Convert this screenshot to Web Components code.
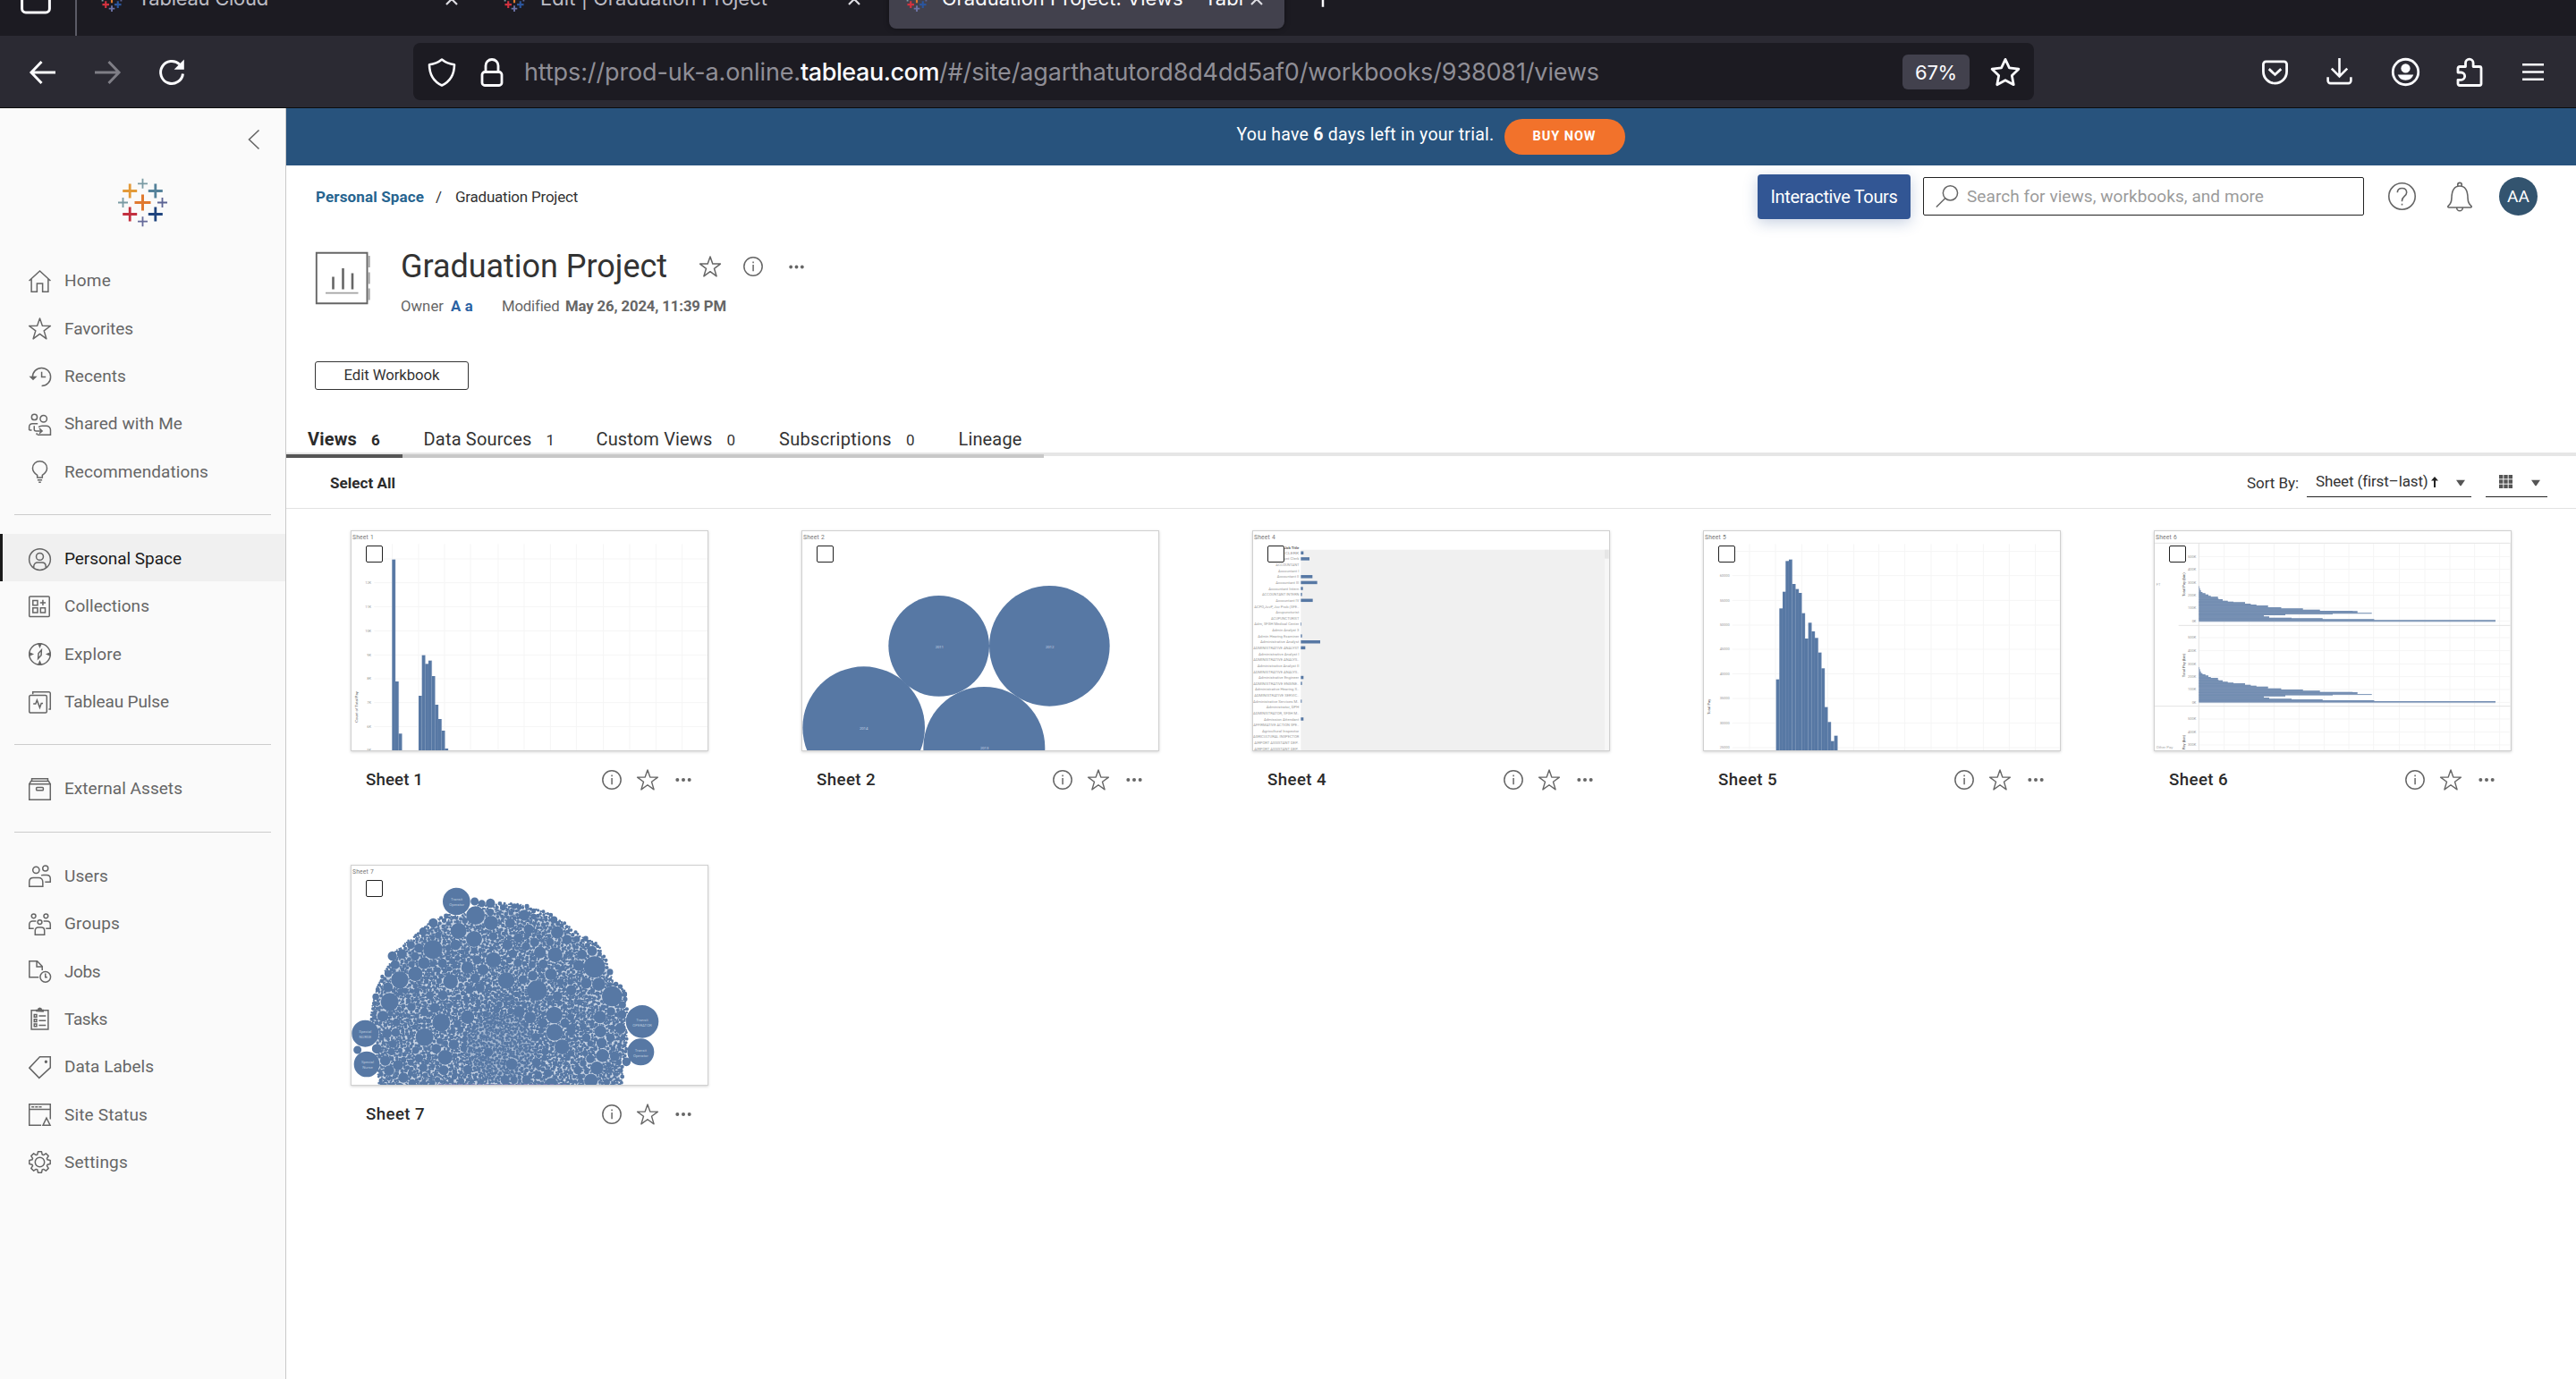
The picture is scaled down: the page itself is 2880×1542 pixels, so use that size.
<!DOCTYPE html>
<html lang="en">
<head>
<meta charset="utf-8">
<title>Graduation Project: Views</title>
<style>
html,body{margin:0;padding:0;background:#fff}
body{width:2880px;height:1542px;overflow:hidden;font-family:Roboto,"Liberation Sans",sans-serif;color:#333}
</style>
</head>
<body>
<workbook-app></workbook-app>
<script>
const define=(name,html,after)=>customElements.define(name,class extends HTMLElement{
  connectedCallback(){
    if(this.shadowRoot)return;
    const root=this.attachShadow({mode:'open'});
    root.innerHTML=typeof html==='function'?html(this):html;
    if(after)after(this,root);
  }
});

/* Text run that spreads its letters over a given width */
define('fit-text',`<style>:host{display:block;flex:none;white-space:nowrap}span{display:inline-block;white-space:pre}</style><span><slot></slot></span>`,(el,root)=>{
  const w=+el.getAttribute('w'),s=root.querySelector('span');
  el.style.width=w+'px';
  const n=el.textContent.length,nat=s.getBoundingClientRect().width;
  if(nat)s.style.letterSpacing=((w-nat)/n).toFixed(3)+'px';
});

const P=(c,x,y,h,s)=>`<path stroke="${c}" stroke-width="${s}" d="M${x-h} ${y}h${2*h}M${x} ${y-h}v${2*h}"/>`;
const LOGO=P('#e0792f',27.5,27.5,9,3)+P('#e39a38',13.2,14.5,8,2.8)+P('#55829a',41.8,14.5,8,2.8)+P('#c22f3e',13.2,40.5,8,2.8)+P('#1f447e',41.8,40.5,8,2.8)+P('#7a9ba4',27.5,6.3,5.5,1.8)+P('#7a9ba4',5.5,27.5,5.5,1.8)+P('#5c6494',49.5,27.5,5.5,1.8)+P('#656a9a',27.5,48.7,5.5,1.8);
/* Heavier strokes keep the small tab mark readable */
const MARK=P('#e0792f',27.5,27.5,9,4.5)+P('#e39a38',13.2,14.5,8,4.5)+P('#55829a',41.8,14.5,8,4.5)+P('#d2323f',13.2,40.5,8,4.5)+P('#2b559c',41.8,40.5,8,4.5)+P('#7a9ba4',27.5,6.3,5.5,4)+P('#7a9ba4',5.5,27.5,5.5,4)+P('#5c6494',49.5,27.5,5.5,4)+P('#6d72a6',27.5,50,7,4);
const gear=(()=>{let d='';const n=8;for(let i=0;i<n;i++){const a=i*Math.PI/4;[[-.30,8.6],[-.17,11.4],[.17,11.4],[.30,8.6]].forEach(([o,r],k)=>{d+=(i||k?'L':'M')+(12+r*Math.cos(a+o)).toFixed(2)+' '+(12+r*Math.sin(a+o)).toFixed(2)})}return d+'Z'})();
const STAR='M12 .9l2.8 8.1 8.6.1-6.9 5.2 2.6 8.6L12 17.7l-7.1 5.2 2.6-8.6L.6 9.1 9.2 9z';
const ICONS={
 logo:[55,LOGO],
 mark:[55,MARK],
 chevron:[24,'<path d="M17.5 1.5L6.5 12l11 10.5"/>'],
 home:[24,'<path d="M.5 11.5L12 1l11.5 10.5M3 9.6V23.3h6v-9h6v9h6V9.6"/>'],
 star:[24,`<path stroke-linejoin="round" d="${STAR}"/>`],
 recents:[24,'<path d="M4.2 12A9.7 9.7 0 1 1 14 21.7M14 6.5V12h4.4"/><path fill="currentColor" stroke="none" d="M.4 11.2h8.8l-4.4 4.5z"/>'],
 shared:[24,'<circle cx="6.2" cy="4.2" r="3"/><circle cx="16" cy="6" r="3.6"/><path d="M.6 18.2v-3.6c0-2.3 1.6-3.4 3.6-3.4h5.6M.6 18.2h2.8M9.5 23.3h14v-5.2c0-2.7-2-4.4-4.6-4.4h-4.4c-1.600 0-2.8.3-3.8 1.3M6 13.6v3.6c0 1.200.7 1.900 1.900 1.900h6M8.800 21.300v2M11.500 16.400l3 2.700-3 2.700"/>'],
 bulb:[24,'<path d="M9.3 18.2v-2.4C6.400 13.800 4.300 11.500 4.300 8.200 4.300 4 7.600.8 12 .8s7.700 3.200 7.700 7.400c0 3.300-2.100 5.600-5 7.600v2.400zM9.500 20.800h5M10.800 23.300h2.400"/>'],
 person:[24,'<circle cx="12" cy="12" r="11.400"/><circle cx="12" cy="9" r="3.800"/><path d="M5.500 21.200v-1.400c0-2.800 1.700-4.400 4.200-4.400h4.600c2.500 0 4.200 1.600 4.200 4.400v1.400"/>'],
 collections:[24,'<rect x=".7" y=".9" width="21.600" height="21.600" rx="1"/><path d="M4.600 5.300h5v5h-5zM4.600 13.300h5v5h-5zM12.800 13.300h5v5h-5zM15.300 4.600v6M12.300 7.600h6"/>'],
 explore:[24,'<circle cx="12" cy="12" r="11.300"/><path d="M13.800 7.500l-.3 5.600-3.300 3.600.4-5.600z"/><path fill="currentColor" d="M12 4l-1.300-3h2.600zM12 20l-1.300 3h2.600zM4 12l-3-1.300v2.600zM20 12l3-1.300v2.600z"/>'],
 pulse:[24,'<rect x=".7" y="4.300" width="18.800" height="18.800" rx="1.500"/><path d="M4.500 3V.8h17.300a1.500 1.500 0 0 1 1.500 1.500v17H21.500M5 13.500h2.500l1.500-4 3 8 1.600-4.500h1.800"/>'],
 external:[24,'<path d="M.7 6.400h22.600v16.900H.7zM.8 6.400l1.700-3h19l1.700 3M3.400 3.200V.8h17.200v2.400"/><rect x="8.300" y="10" width="7.400" height="3.200" rx=".8"/>'],
 users:[24,'<circle cx="8" cy="5.600" r="3.500"/><circle cx="18" cy="3.800" r="2.900"/><path d="M.7 23.200v-4.800c0-2.800 1.800-4.500 4.400-4.500h5.700c2.600 0 4.400 1.700 4.400 4.500v4.800zM13.500 11.400c.7-.3 1.300-.4 2-.4h3.800c2.400 0 4 1.500 4 3.800v3.600h-5.700"/>'],
 groups:[24,'<circle cx="5.400" cy="3.200" r="2.300"/><circle cx="18.600" cy="3.200" r="2.300"/><circle cx="12" cy="9.700" r="2.300"/><path d="M7 23.300v-4.500c0-2.200 1.300-3.500 3.300-3.500h3.400c2 0 3.300 1.300 3.300 3.500v4.500zM8 8.600H4.400C2.100 8.600.7 10 .7 12.200v4.400h4.800M16 8.600h3.600c2.300 0 3.700 1.400 3.700 3.600v4.400h-4.800"/>'],
 jobs:[24,'<path d="M10.800 18H.8V.7h8.400l5.400 5.500v4.300M8.700.9v5.700h5.700"/><circle cx="18" cy="17.600" r="5.600"/><path d="M18 14v4h2"/>'],
 tasks:[24,'<path d="M3 2.600h18V23H3z"/><path fill="currentColor" d="M8.500 3.500V2.300H10c.3-1.600 1-2 2-2s1.700.4 2 2h1.500v1.600z"/><path d="M6 7.300h2.600v2.600H6zM6 12.300h2.600v2.600H6zM6 17.300h2.600v2.600H6zM11 8.600h7.500M11 13.600h7.500M11 18.600h7.500"/>'],
 labels:[24,'<path d="M.8 12.600L12 .8h11.300v11.500L11.300 23.400z"/><circle cx="18.600" cy="6" r=".9" fill="currentColor"/>'],
 status:[24,'<path d="M13.500 23.200H.7V.8h22.600v16M.7 6.300h22.600M3 3.600h3M7 3.600h3M11 3.600h3M19.200 15.500l-3.800 7.800h7.700z"/>'],
 settings:[24,`<path stroke-linejoin="round" d="${gear}"/><circle cx="12" cy="12" r="5"/>`],
 info:[24,'<circle cx="12" cy="12" r="11.100"/><path d="M12.100 9.800v8M12.100 6v2"/>'],
 dots:[24,'<g fill="currentColor" stroke="none"><circle cx="4" cy="12" r="2.400"/><circle cx="12" cy="12" r="2.400"/><circle cx="20" cy="12" r="2.400"/></g>'],
 workbook:[60,'<path d="M.8.8h56.700v56.400H.8z"/><path stroke-width="2.600" d="M19.500 27.500v14M30.500 18v23.500M41 23.500v18"/><path opacity=".6" d="M11 45.600h36.500M59.700 4v13M59.700 22.500v13M59.700 40.500v13"/>'],
 mag:[24,'<circle cx="15.800" cy="8.500" r="7.800"/><path d="M10.300 14.200L.8 23.500"/>'],
 help:[24,'<circle cx="12" cy="12" r="11.400"/><path d="M8 8.800C8 6.300 9.700 5 12 5s4 1.400 4 3.700c0 3-4 3.500-4 7v.8M12 18.400v1.400"/>'],
 bell:[24,'<path d="M2.500 19.600c2-1.600 2.600-3 2.700-6.300C5.300 7 7.500 3 12 3s6.700 4 6.800 10.300c.1 3.300.7 4.700 2.700 6.300.8.7.4 1.400-.5 1.400H3c-.9 0-1.300-.7-.5-1.400zM10.300 3V2a1.700 1.700 0 0 1 3.400 0v1M9.500 21.300a2.500 2.500 0 0 0 5 0"/>'],
 back:[32,'<path d="M3 16h27M14.500 4L3 16l11.500 12"/>'],
 fwd:[32,'<path d="M2 16h27M17.500 4L29 16 17.500 28"/>'],
 reload:[32,'<path d="M28.500 17.500A12.500 12.500 0 1 1 24.800 7"/><path fill="currentColor" stroke="none" d="M29.800 1.500v11.200H18.600z"/>'],
 shield:[32,'<path stroke-linejoin="round" d="M16 1.500c4 3.300 8.500 5.200 14 5.700-.1 11.500-4.500 18.800-14 23.300C6.500 26 2.100 18.700 2 7.200 7.500 6.700 12 4.800 16 1.500z"/>'],
 lock:[32,'<rect x="5" y="15.500" width="22" height="15" rx="3"/><path d="M9 15V8.500a7 7 0 0 1 14 0V15"/>'],
 bstar:[32,'<path stroke-linejoin="round" d="M16 2.200l4.200 8.900 9.800 1.300-7.100 6.800 1.800 9.700L16 24.200l-8.700 4.700 1.800-9.700L2 12.400l9.800-1.300z"/>'],
 pocket:[32,'<path d="M5.500 4h21A3 3 0 0 1 29.500 7v8.500a13.500 13.500 0 0 1-27 0V7a3 3 0 0 1 3-3zM9 12.500l7 6.500 7-6.500"/>'],
 download:[32,'<path d="M16 0v20.500M7 12l9 9 9-9M2.700 22v4a3 3 0 0 0 3 3h20.600a3 3 0 0 0 3-3v-4"/>'],
 account:[32,'<circle cx="16" cy="16" r="13.800"/><circle cx="16" cy="12" r="5" fill="currentColor" stroke="none"/><path fill="currentColor" stroke="none" d="M7.500 19h17a9 9 0 0 1-17 0z"/>'],
 puzzle:[32,'<path stroke-linejoin="round" d="M3 16V11.500a2 2 0 0 1 2-2h6.500V5.500a4.300 4.300 0 0 1 8.600 0v4H27a2 2 0 0 1 2 2V28.500a2 2 0 0 1-2 2H5a2 2 0 0 1-2-2v-4.200h3.500a4.100 4.100 0 0 0 0-8.300z"/>'],
 menu:[32,'<path d="M4 7.200h24M4 15.500h24M4 23.800h24"/>'],
 tabbox:[32,'<path d="M1.500 0v26a4 4 0 0 0 4 4h21a4 4 0 0 0 4-4V0"/>'],
 close:[24,'<path d="M3 3l18 18M21 3L3 21"/>'],
 plus:[24,'<path d="M12 2v20M2 12h20"/>'],
 grid:[24,'<g fill="currentColor" stroke="none">'+[0,8.500,17].map(y=>[0,8.500,17].map(x=>`<rect x="${x}" y="${y}" width="7" height="7"/>`).join('')).join('')+'</g>'],
 caret:[12,'<path fill="currentColor" stroke="none" d="M0 2.200h12L6.800 9.600a1 1 0 0 1-1.600 0z"/>'],
 sortup:[12,'<path fill="currentColor" stroke="none" d="M6 0l4 4.500H7V12H5V4.500H2z"/>']
};
define('ui-icon',el=>{
  const [vb,body]=ICONS[el.getAttribute('name')],s=el.getAttribute('size')||24,k=el.getAttribute('sw')||1.5;
  return `<style>:host{display:block;flex:none;width:${s}px;height:${s}px}svg{display:block;overflow:visible}</style><svg width="${s}" height="${s}" viewBox="0 0 ${vb} ${vb}" fill="none" stroke="currentColor" stroke-width="${k*vb/s}">${body}</svg>`;
});

/* ---------- Browser chrome ---------- */
define('browser-tab',el=>`<style>
:host{display:flex;align-items:center;height:66px;width:442px;box-sizing:border-box;padding-left:18px;flex:none;color:#bdbdc5;border-radius:8px;font:400 22px/26px Inter,sans-serif}
:host([active]){background:#42414d;color:#fbfbfe;box-shadow:0 0 6px rgba(0,0,0,.4)}
.t{margin-left:${el.getAttribute('gap')||16}px;flex:1;overflow:hidden;padding-bottom:2px}
ui-icon[name=close]{margin-right:23px;color:#dcdce2}
</style><ui-icon name="mark" size="26"></ui-icon><div class="t"><slot></slot></div><ui-icon name="close" size="16" sw="2.2"></ui-icon>`);

define('browser-chrome',`<style>
:host{display:block;background:#2b2a33;border-bottom:1px solid #0c0c0d;height:120px;color:#fbfbfe;font-family:Inter,sans-serif}
.strip{height:40px;background:#1c1b22;overflow:hidden;display:flex;align-items:flex-end}
.inner{display:flex;align-items:center;height:66px;margin-bottom:8px;width:100%}
.div{width:2px;height:90px;background:#5b5b66;margin:0 10px 0 27px}
.bar{display:flex;align-items:center;height:80px}
.bar>ui-icon{margin-top:1px}
.url{display:flex;align-items:center;width:1812px;height:64px;border-radius:8px;background:#1c1b22;box-sizing:border-box;padding:1px 0 0 16px;font-size:27px;line-height:34px;color:#8f8e96}
.url fit-text{padding-top:1px}
.url ui-icon{color:#fbfbfe}
.url b{font-weight:500;color:#fbfbfe}
.zoom{background:#42414d;border-radius:6px;height:39px;width:75px;display:flex;align-items:center;justify-content:center;font-size:22px;color:#fbfbfe}
.off{color:#7f7e86}
</style>
<div class="strip"><div class="inner">
<ui-icon name="tabbox" size="34" sw="3" style="margin-left:23px"></ui-icon><div class="div"></div>
<browser-tab style="margin-left:-2px;margin-right:8px"><fit-text w="146">Tableau Cloud</fit-text></browser-tab>
<browser-tab style="margin-right:8px"><fit-text w="254">Edit | Graduation Project</fit-text></browser-tab>
<browser-tab active gap="15"><fit-text w="337">Graduation Project: Views – Tabl</fit-text></browser-tab>
<ui-icon name="plus" size="26" sw="2.5" style="margin-left:30px;margin-top:-4px"></ui-icon>
<ui-icon name="chevron" size="26" sw="2.5" style="margin-left:1335px;margin-top:-26px;transform:rotate(-90deg)"></ui-icon>
</div></div>
<div class="bar">
<ui-icon name="back" size="32" sw="3" style="margin-left:32px"></ui-icon>
<ui-icon class="off" name="fwd" size="32" sw="3" style="margin-left:40px"></ui-icon>
<ui-icon name="reload" size="32" sw="3" style="margin-left:40px;margin-right:254px"></ui-icon>
<div class="url">
<ui-icon name="shield" size="32" sw="2.6"></ui-icon><ui-icon name="lock" size="32" sw="2.8" style="margin:0 20px 0 24px"></ui-icon>
<fit-text w="309">https://prod-uk-a.online.</fit-text><fit-text w="155"><b>tableau.com</b></fit-text><fit-text w="738">/#/site/agarthatutord8d4dd5af0/workbooks/938081/views</fit-text>
<div class="zoom" style="margin-left:339px"><fit-text w="47">67%</fit-text></div>
<ui-icon name="bstar" size="34" sw="2.8" style="margin-left:23px"></ui-icon></div>
<ui-icon name="pocket" size="31" sw="2.8" style="margin-left:254px"></ui-icon>
<ui-icon name="download" size="31" sw="2.6" style="margin-left:41px"></ui-icon>
<ui-icon name="account" size="33" sw="2.8" style="margin-left:42px"></ui-icon>
<ui-icon name="puzzle" size="32" sw="2.8" style="margin-left:39px"></ui-icon>
<ui-icon name="menu" size="32" sw="2.6" style="margin-left:39px"></ui-icon>
</div>`);

/* ---------- Sidebar ---------- */
define('nav-item',el=>`<style>
:host{display:flex;align-items:center;box-sizing:border-box;height:53.33px;padding:3px 0 0 32px;color:#666;font-size:19px;line-height:24px}
:host([selected]){background:#f0f0f0;box-shadow:inset 3px 0 #1a1a1a}
:host([selected]) fit-text{color:#1a1a1a}
fit-text{margin-left:15px}
</style><ui-icon name="${el.getAttribute('icon')}" size="25" sw="1.5"></ui-icon><fit-text w="${el.getAttribute('w')}">${el.getAttribute('label')}</fit-text>`);
const NAV=[[['home','Home',52],['star','Favorites',77],['recents','Recents',69],['shared','Shared with Me',132],['bulb','Recommendations',161]],
[['person','Personal Space',131],['collections','Collections',95],['explore','Explore',64],['pulse','Tableau Pulse',117]],
[['external','External Assets',132]],
[['users','Users',49],['groups','Groups',62],['jobs','Jobs',40],['tasks','Tasks',48],['labels','Data Labels',100],['status','Site Status',93],['settings','Settings',71]]];
define('side-nav',`<style>
:host{display:block;width:319px;height:1421px;background:#fafafa;border-right:1px solid #c9c9c9;flex:none}
.top{display:flex;flex-direction:column;height:165.200px}
.top ui-icon:first-child{align-self:flex-end;margin:23px 23px 0 0;color:#666}
.top ui-icon:last-child{align-self:center;margin-top:31px}
hr{border:0;height:1px;background:#ccc;margin:22px 16px 21.100px}
</style><div class="top"><ui-icon name="chevron" size="24" sw="1.6"></ui-icon><ui-icon name="logo" size="55" sw="1"></ui-icon></div>
${NAV.map(g=>g.map(([i,l,w])=>`<nav-item icon="${i}" label="${l}" w="${w}"${i==='person'?' selected':''}></nav-item>`).join('')).join('<hr>')}`);

/* ---------- Thumbnails ---------- */
const B='#5778a4';
const txt=(x,y,s,o='')=>`<text x="${x}" y="${y}" ${o}>${s}</text>`;
const lines=(xs,ys,x1,x2,y1,y2,c='#f5f5f5')=>`<path stroke="${c}" stroke-width="3" d="${xs.map(x=>`M${x} ${y1}V${y2}`).join('')}${ys.map(y=>`M${x1} ${y}H${x2}`).join('')}"/>`;
const bars=(list,w,bottom)=>list.map(([x,y])=>`<rect x="${x}" y="${y}" width="${w}" height="${bottom-y}" fill="${B}"/><path stroke="#7d97bb" stroke-width="1.200" d="M${x+w} ${y}V${bottom}"/>`).join('');
const axis=(x,ys,labels,w)=>ys.map((y,i)=>txt(x,y+4,labels[i],`font-size="12" fill="#999" text-anchor="end" textLength="${w[i]||w}"`)).join('');
const THUMBS={
 'Sheet 1':[36,39,()=>lines([176,264,351,438,531,618,706,793,884,972,1060,1148],[135,215,295,376,457,537,617,697],115,1233,85,777)
  +bars([[175,137],[186,546],[197,721],[264,594],[275,458],[286,487],[297,476],[308,528],[319,624],[330,672],[341,711],[352,771]],11,777)
  +axis(105,[215,295,376,457,537,617,697,775],['12K','11K','10K','9K','8K','7K','6K','5K'],[20,20,20,14,14,14,14,14])
  +txt(0,0,'Count of Total Pay','transform="translate(61 683) rotate(-90)" font-size="12.500" fill="#555" textLength="103" lengthAdjust="spacingAndGlyphs"')],
 'Sheet 2':[48,39,()=>`<g fill="${B}"><circle cx="509" cy="427" r="169"/><circle cx="880" cy="427" r="202"/><circle cx="257" cy="701" r="205"/><circle cx="661" cy="768" r="204"/></g>`
  +[[511,434,'2011'],[881,434,'2012'],[257,708,'2014'],[662,775,'2013']].map(([x,y,s])=>txt(x,y,s,'text-anchor="middle" font-size="13" fill="#c3d0e2" textLength="28"')).join('')],
 'Sheet 4':[60,39,()=>{
  const rows=['DEPT CLERK','Account Clerk','ACCOUNTANT','Accountant I','Accountant II','Accountant III','Accountant Intern','ACCOUNTANT INTERN','Accountant IV','ACPO,JuvP, Juv Prob (SFE..','Acupuncturist','ACUPUNCTURIST','Adm, SFGH Medical Center','Admin Analyst 3','Admin Hearing Examiner','Administrative Analyst','ADMINISTRATIVE ANALYST','Administrative Analyst I','ADMINISTRATIVE ANALYS..','Administrative Analyst II','ADMINISTRATIVE ANALYS..','Administrative Engineer','ADMINISTRATIVE ENGINE..','Administrative Hearing S..','ADMINISTRATIVE SERVIC..','Administrative Services M..','Administrator, DPH','ADMINISTRATOR, SFGH M..','Admission Attendant','AFFIRMATIVE ACTION SPE..','Agricultural Inspector','AGRICULTURAL INSPECTOR','AIRPORT ASSISTANT DEP..','AIRPORT ASSISTANT DEP..'];
  const W=[90,80,78,70,74,78,102,124,78,150,78,94,150,90,138,130,153,136,153,140,153,136,153,148,150,154,110,154,118,153,124,154,150,150];
  const v={0:9,1:29,4:39,5:55,6:7,7:4,8:40,12:2,14:4,15:65,16:15,21:9,22:4,25:3,28:9};
  return `<path fill="#f0f0f0" d="M223 104h1019v673H223z"/><path fill="#f7f7f7" d="M1242 104h17v673h-17z"/><path fill="#e6e6e6" d="M1242 104h14v30h-14z"/>`+txt(217,101,'Job Title','text-anchor="end" font-size="13" fill="#666" font-weight="700" textLength="50"')
   +rows.map((r,i)=>txt(217,119.500+i*19.900,r,`text-anchor="end" font-size="12.500" fill="#999" textLength="${W[i]}" lengthAdjust="spacingAndGlyphs"`)+(v[i]?`<rect x="223" y="${109.500+i*19.900}" width="${v[i]}" height="10.500" fill="${B}"/>`:'')).join('')}],
 'Sheet 5':[42,39,()=>lines([198,285,373,460,548,632,719,807,894,982,1069,1157],[110,191,274,357,438,520,603,686,768],140,1238,85,777)
  +bars([[287,539],[298,301],[309,245],[319,142],[330,137],[341,219],[352,236],[362,249],[373,317],[384,402],[395,349],[406,378],[417,400],[428,449],[439,502],[449,632],[460,682],[471,746],[482,728]],11,777)
  +axis(131,[191,274,357,438,520,603,686,768],['60000','55000','50000','45000','40000','35000','30000','25000'],33)
  +txt(0,0,'Total Pay','transform="translate(67 657) rotate(-90)" font-size="12.500" fill="#555" textLength="52"')],
 'Sheet 6':[54,279,()=>{
  const prof=[[467,2],[473,4],[480,7],[486,12],[490,22],[494,32],[499,40],[502,64],[508,66],[510,80],[515,97],[518,116],[520,155],[525,174],[528,193],[531,232],[537,276],[541,349],[545,406],[549,516],[550,532],[556,580],[558,449],[560,290],[564,218],[568,236],[572,311],[574,415],[577,588],[580,995],[583,995]];
  const shape=dy=>{let d=`M205 ${465+dy}`;prof.forEach(([y,w],i)=>{const n=(prof[i+1]||[584])[0];d+=`L${205+w} ${y+dy}V${n+dy}`});return `<path fill="#7c94b7" d="${d}H205Z"/><path stroke="#6c88af" stroke-width="1.500" d="${prof.slice(3).map(([y,w])=>`M205 ${y+2+dy}h${w}`).join('')}"/>`};
  const lab=['500K','400K','300K','200K','100K','0K'],w=[28,28,28,28,28,14];
  const v=(y,s,l)=>txt(0,0,s,`transform="translate(158 ${y}) rotate(-90)" font-size="13" fill="#444" textLength="${l}"`);
  return lines([205,290,373,457,541,625,708,791,878,963,1047,1130,1214,1249],[367,410,454,497,540,583,639,683,727,770,813,856,912,956,999],205,1250,323,1017)
  +`<path stroke="#e3e3e3" stroke-width="3" d="M56 322H1250M137 598H1250M56 869H1250"/><path stroke="#ddd" stroke-width="2" d="M205 323V1017"/>`+shape(0)+shape(272)
  +axis(196,[367,410,454,497,540,583],lab,w)+axis(196,[639,683,727,770,813,856],lab,w)+axis(196,[912,956,999],lab,w)
  +v(501,'Total Pay (bin)',80)+v(772,'Total Pay (bin)',80)+v(1015,'Pay (bin)',50)+txt(62,466,'FT','font-size="12" fill="#aaa"')+txt(62,1012,'Other Pay','font-size="13" fill="#aaa" textLength="56"')}],
 'Sheet 7':[36,51,()=>{
  const C=[[391,174,46],[1014,577,55],[1009,679,45],[85,617,45],[90,720,43],[455,221,31],[507,246,24],[398,273,27],[450,300,27],[312,335,32],[313,246,15],[282,381,20],[201,437,29],[253,417,24],[167,511,30],[144,559,18],[371,443,25],[344,381,15],[428,396,21],[480,403,18],[515,370,26],[558,439,28],[661,473,34],[722,353,25],[671,345,20],[729,278,21],[618,220,18],[762,302,16],[812,352,16],[854,394,36],[868,452,22],[826,448,18],[913,492,34],[708,418,20],[719,555,28],[720,613,28],[745,662,25],[680,582,16],[638,563,20],[601,544,19],[428,562,23],[340,580,30],[284,629,30],[353,697,25],[382,654,17],[323,668,16],[872,562,21],[874,610,20],[878,649,17],[881,691,22],[862,733,22],[842,775,23],[709,790,24],[576,720,19],[659,714,15],[498,680,15],[195,723,17],[165,741,17],[152,708,17],[213,765,17],[124,668,16],[59,672,13],[318,531,17],[345,488,16],[562,320,17],[514,291,14],[571,247,16],[633,267,16],[388,320,17],[265,330,15],[176,357,15],[208,350,16],[185,386,15],[161,462,16],[238,320,13],[252,358,14],[435,470,14],[454,431,16],[614,436,15],[730,492,16],[776,472,17],[801,389,18],[846,340,16],[941,600,18],[922,693,16],[961,712,14],[505,180,15],[476,181,12],[452,174,13],[585,190,9],[547,194,10],[348,740,16],[429,738,15],[265,700,14],[254,673,12],[240,528,14],[189,580,13],[187,614,14],[178,652,13],[909,543,14],[908,632,14],[947,553,14],[698,750,14],[798,740,14],[840,702,14],[460,370,15],[597,380,14],[580,350,14],[653,311,15],[624,325,14],[647,423,16],[682,384,15],[705,310,13]];
  const poly=[[132,800],[125,760],[118,700],[104,600],[106,530],[128,450],[160,390],[180,345],[240,296],[310,238],[370,218],[440,185],[530,180],[600,182],[690,208],[745,240],[820,295],[866,318],[898,380],[918,440],[955,470],[966,560],[962,660],[950,740],[945,800]];
  const inside=(x,y)=>{let r=false;for(let i=0,j=poly.length-1;i<poly.length;j=i++){const[a,b]=poly[i],[c,d]=poly[j];if((b>y)!==(d>y)&&x<(c-a)*(y-b)/(d-b)+a)r=!r}return r};
  let s=20240526;const rnd=()=>(s=(s*1664525+1013904223)>>>0)/4294967296;
  for(let k=0;k<46000&&C.length<4400;k++){
   const x=102+rnd()*866,y=165+rnd()*635;if(!inside(x,y))continue;
   const core=Math.hypot(x-540,y-660);let m=core<110?5.5:5.500+Math.pow(rnd(),3)*11;if(k>5000)m=Math.min(m,7.500);
   for(let i=0;i<C.length&&m>=2.200;i++){const c=C[i],dx=c[0]-x,dy=c[1]-y,q=m+c[2];if(dx<q&&dx>-q&&dy<q&&dy>-q)m=Math.min(m,Math.sqrt(dx*dx+dy*dy)-c[2])}
   if(m>=2.200)C.push([x,y,m]);
  }
  const d=C.map(([x,y,q])=>{const r=q+(q<20?.5:0);return `M${(x-r).toFixed(1)} ${y.toFixed(1)}a${r.toFixed(1)} ${r.toFixed(1)} 0 1 0 ${(2*r).toFixed(1)} 0a${r.toFixed(1)} ${r.toFixed(1)} 0 1 0 ${(-2*r).toFixed(1)} 0`}).join('');
  const base=poly.map(([x,y])=>[540+(x-540)*.975,700+(y-700)*.965].map(n=>n.toFixed(0)).join(' ')).join('L');
  return `<path fill="#9fb3ce" fill-opacity=".6" d="M${base}L945 800H132Z"/><circle cx="540" cy="660" r="115" fill="#8ca4c5" fill-opacity=".6"/><path fill="${B}" d="${d}"/><path stroke="#7f7fb8" stroke-width="3" d="M330 788H760" stroke-dasharray="14 8"/>`+[[392,172,'Transit'],[392,189,'Operator'],[1014,575,'Transit'],[1014,594,'OPERATOR'],[1009,677,'Transit'],[1009,695,'Operator'],[85,615,'Special'],[85,634,'NURSE'],[93,718,'Special'],[93,736,'Nurse']].map(([x,y,t])=>txt(x,y,t,'text-anchor="middle" font-size="13" fill="#b9c8dc"')).join('')}]
};
define('view-thumb',el=>{
  const n=el.getAttribute('name'),[ox,oy,draw]=THUMBS[n];
  return `<style>:host{display:block;position:relative;width:400px;height:247px;box-shadow:0 1px 3px rgba(0,0,0,.18)}svg{display:block}
i{position:absolute;left:17px;top:17px;width:17px;height:17px;border:1px solid #222;border-radius:2px;background:#fff}</style>
<svg width="400" height="247" viewBox="${ox} ${oy} 1200 741" font-family="Roboto,sans-serif"><rect x="${ox}" y="${oy}" width="1200" height="741" fill="#fff"/>${draw()}${txt(ox+6,oy+30,n,'font-size="20" fill="#777" textLength="71"')}<rect x="${ox+1.5}" y="${oy+1.5}" width="1197" height="738" fill="none" stroke="#d0d0d0" stroke-width="3"/></svg><i></i>`});

define('view-card',el=>{const n=el.getAttribute('name');return `<style>
:host{display:block;width:400px}
.f{display:flex;align-items:center;height:64px;padding-left:17px;color:#666}
fit-text{font-weight:500;font-size:18.700px;line-height:24px;color:#2b2b2b;margin-right:auto}
</style><view-thumb name="${n}"></view-thumb><div class="f"><fit-text w="${n==='Sheet 1'?64:66}">${n}</fit-text>
<ui-icon name="info" size="22" sw="1.500"></ui-icon><ui-icon name="star" size="24" sw="1.400" style="margin:0 18px 0 17px"></ui-icon><ui-icon name="dots" size="20" style="margin-right:18px"></ui-icon></div>`});

/* ---------- Main area ---------- */
define('trial-banner',`<style>
:host{display:flex;align-items:center;justify-content:center;height:64px;background:#28537d;color:#fff;font-size:19.500px;line-height:24px;padding-right:1px}
fit-text{margin-top:-5px}b{font-weight:700}
.b{margin-left:11px;width:135px;height:40px;border-radius:20px;background:#f2722b;display:flex;align-items:center;justify-content:center;font-weight:700;font-size:14.500px}
.b fit-text{margin:0}
</style><fit-text w="288">You have <b>6</b> days left in your trial.</fit-text><div class="b"><fit-text w="71">BUY NOW</fit-text></div>`);

define('page-header',`<style>
:host{display:flex;align-items:center;height:69px;padding:0 43px 0 33px;font-size:17px;line-height:22px;color:#333}
.l{font-weight:700;color:#26648f}
.tour{margin-left:auto;width:171px;height:50px;border-radius:4px;background:#325694;color:#fff;display:flex;align-items:center;justify-content:center;font-size:20px;box-shadow:0 4px 16px rgba(50,86,148,.28)}
.s{margin:0 27px 0 14px;width:493px;height:43px;box-sizing:border-box;border:1px solid #222;border-radius:2px;display:flex;align-items:center;padding-left:13px;color:#666}
.s fit-text{margin-left:10px;font-size:19px;color:#9b9b9b}
.a{width:43px;height:43px;border-radius:50%;background:#33546f;color:#fff;display:flex;align-items:center;justify-content:center;font-size:19px}
ui-icon{color:#666}
</style><fit-text class="l" w="121">Personal Space</fit-text><fit-text w="8" style="margin:0 14px 0 13px">/</fit-text><fit-text w="137">Graduation Project</fit-text>
<div class="tour"><fit-text w="142">Interactive Tours</fit-text></div>
<div class="s"><ui-icon name="mag" size="25" sw="1.500"></ui-icon><fit-text w="332">Search for views, workbooks, and more</fit-text></div>
<ui-icon name="help" size="31" sw="1.600"></ui-icon><ui-icon name="bell" size="32" sw="1.600" style="margin:0 28px 0 33px"></ui-icon><div class="a"><fit-text w="25">AA</fit-text></div>`);

define('workbook-title',`<style>
:host{display:block;padding:28px 0 0 32px;color:#666;font-size:16.700px;line-height:20px}
.r{display:flex;align-items:center}.top{display:flex;margin-left:1px}
.t{font-size:36px;line-height:32px;color:#333}
.c{margin-left:35px}.m{margin-top:18.600px}
b{font-weight:700}.a{color:#2a62a3}
.btn{margin-top:51.400px;width:170px;height:30px;border:1px solid #333;border-radius:3px;display:flex;align-items:center;justify-content:center;color:#333}
</style><div class="top"><ui-icon name="workbook" size="60" sw="1.900"></ui-icon><div class="c">
<div class="r"><fit-text class="t" w="298">Graduation Project</fit-text><ui-icon name="star" size="24" sw="1.500" style="margin-left:36px"></ui-icon><ui-icon name="info" size="22" sw="1.500" style="margin:0 28px 0 25px"></ui-icon><ui-icon name="dots" size="19"></ui-icon></div>
<div class="r m"><fit-text w="48">Owner</fit-text><fit-text w="25" class="a" style="margin:0 32px 0 8px"><b>A a</b></fit-text><fit-text w="64">Modified</fit-text><fit-text w="180" style="margin-left:7px"><b>May 26, 2024, 11:39 PM</b></fit-text></div></div></div>
<div class="btn"><fit-text w="107">Edit Workbook</fit-text></div>`);

define('tab-strip',`<style>
:host{display:flex;height:35px;margin-top:41px;background:linear-gradient(#e6e6e6,#e6e6e6) 0 29px/100% 4px no-repeat;font-size:20px;line-height:29px;color:#333}
.t{display:flex;box-sizing:border-box;height:35px;padding:0 24px;border-bottom:4px solid #c8c8c8}
.on{border-color:#555;font-weight:700;color:#2b2b2b}
.n{font-size:17px;margin-left:16px;line-height:31px}
</style>
<div class="t on"><fit-text w="55">Views</fit-text><fit-text class="n" w="10.500">6</fit-text></div>
<div class="t"><fit-text w="121">Data Sources</fit-text><fit-text class="n" w="8">1</fit-text></div>
<div class="t"><fit-text w="130">Custom Views</fit-text><fit-text class="n" w="10.500">0</fit-text></div>
<div class="t"><fit-text w="126">Subscriptions</fit-text><fit-text class="n" w="10.500">0</fit-text></div>
<div class="t"><fit-text w="71">Lineage</fit-text></div>`);

define('view-toolbar',`<style>
:host{display:flex;align-items:center;box-sizing:border-box;height:57px;border-bottom:1px solid #e2e2e2;padding:0 32px 0 49px;font-size:17px;line-height:22px;color:#333}
b{font-weight:700;color:#2b2b2b}
.sort{margin-left:auto}
.d{display:flex;align-items:center;box-sizing:border-box;height:31px;border-bottom:1px solid #222;margin-top:2px;padding-bottom:5px}
ui-icon{color:#555}
.d ui-icon[name=caret]{margin-top:4px}
</style><fit-text w="73"><b>Select All</b></fit-text><fit-text class="sort" w="58">Sort By:</fit-text>
<div class="d" style="margin-left:9px;width:184px;padding-left:10px"><fit-text w="125">Sheet (first–last)</fit-text><ui-icon name="sortup" size="12" style="margin:3px 18px 0 2px;color:#222"></ui-icon><ui-icon name="caret" size="10"></ui-icon></div>
<div class="d" style="margin-left:16px;width:69px;padding-left:15px"><ui-icon name="grid" size="15" style="margin:2px 21px 0 0"></ui-icon><ui-icon name="caret" size="10"></ui-icon></div>`);

define('view-grid',`<style>:host{display:grid;grid-template-columns:repeat(5,400px);column-gap:104px;row-gap:63.400px;padding:24px 0 0 72px}</style>
${Object.keys(THUMBS).map(n=>`<view-card name="${n}"></view-card>`).join('')}`);

define('workbook-app',`<style>:host{display:block;width:2880px;height:1542px;background:#fff;overflow:hidden}.b{display:flex}main{flex:1;min-width:0}</style>
<browser-chrome></browser-chrome><div class="b"><side-nav></side-nav><main><trial-banner></trial-banner><page-header></page-header><workbook-title></workbook-title><tab-strip></tab-strip><view-toolbar></view-toolbar><view-grid></view-grid></main></div>`);
</script>
</body>
</html>
